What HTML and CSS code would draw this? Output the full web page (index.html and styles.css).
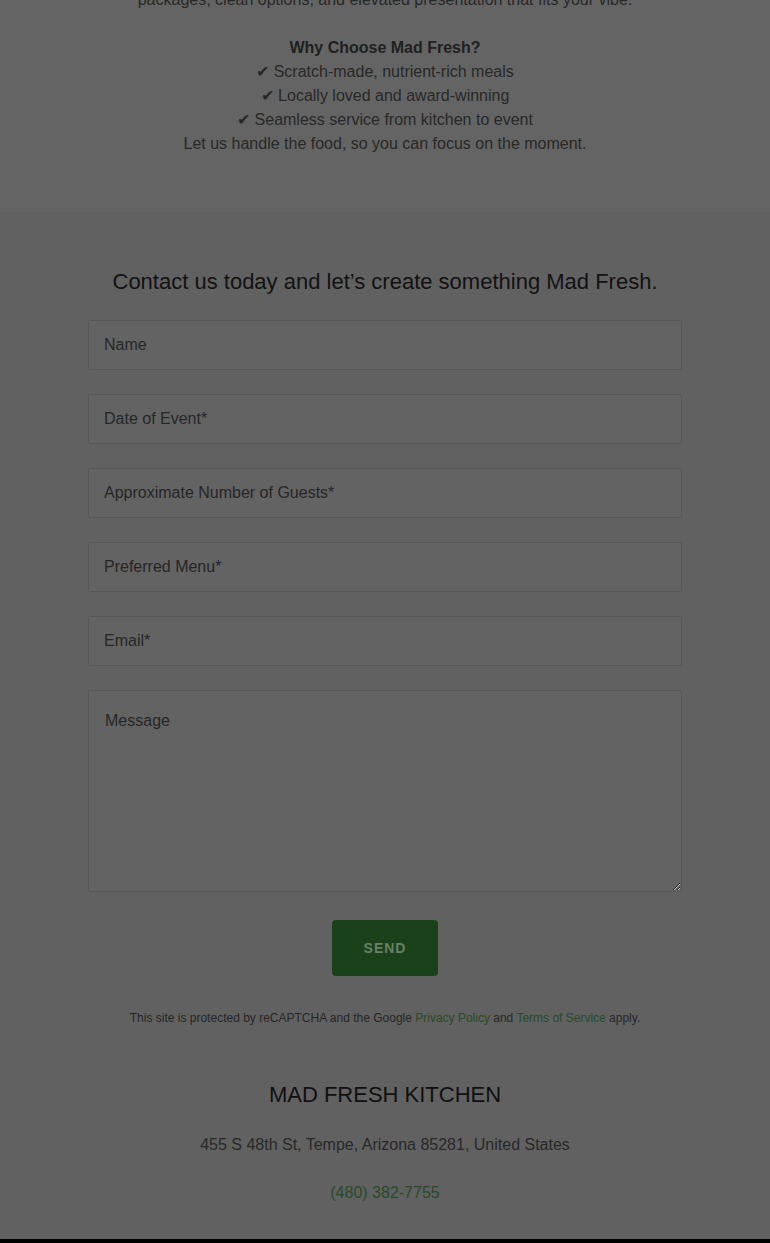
FILE: index.html
```html
<!DOCTYPE html>
<html lang="en">
<head>
<meta charset="utf-8">
<title>Mad Fresh Kitchen</title>
<link rel="stylesheet" href="styles.css">
</head>
<body>
<section class="about">
  <div class="about-text">
    <p>packages, clean options, and elevated presentation that fits your vibe.</p>
    <p class="spacer">&nbsp;</p>
    <p class="strong">Why Choose Mad Fresh?</p>
    <p>✔ Scratch-made, nutrient-rich meals</p>
    <p>✔ Locally loved and award-winning</p>
    <p>✔ Seamless service from kitchen to event</p>
    <p>Let us handle the food, so you can focus on the moment.</p>
  </div>
</section>
<section class="contact">
  <h2 class="contact-title">Contact us today and let’s create something Mad Fresh.</h2>
  <form class="form">
    <input class="field" type="text" placeholder="Name">
    <input class="field" type="text" placeholder="Date of Event*">
    <input class="field" type="text" placeholder="Approximate Number of Guests*">
    <input class="field" type="text" placeholder="Preferred Menu*">
    <input class="field" type="text" placeholder="Email*">
    <textarea class="field area" placeholder="Message"></textarea>
    <button class="send" type="button">SEND</button>
  </form>
  <p class="captcha">This site is protected by reCAPTCHA and the Google <a href="#">Privacy Policy</a> and <a href="#">Terms of Service</a> apply.</p>
  <footer class="footer">
    <h3 class="brand">MAD FRESH KITCHEN</h3>
    <p class="address">455 S 48th St, Tempe, Arizona 85281, United States</p>
    <p class="phone"><a href="#">(480) 382-7755</a></p>
  </footer>
</section>
<div class="bottom-bar"></div>
</body>
</html>
```

FILE: styles.css
```css
* { box-sizing: border-box; }
html, body {
  margin: 0;
  padding: 0;
  background: #616161;
  font-family: "Liberation Sans", Arial, sans-serif;
}
p { margin: 0; }

.about {
  background: #646464;
  overflow: hidden;
  height: 212px;
}
.about-text {
  margin-top: -12px;
  text-align: center;
  font-size: 16px;
  line-height: 24px;
  color: #282828;
}
.about-text .strong {
  font-weight: 700;
  color: #202020;
}

.contact {
  background: #616161;
  padding: 0 88px;
  display: flex;
  flex-direction: column;
  align-items: stretch;
}
.contact-title {
  margin: 56px 0 24px;
  text-align: center;
  font-size: 22px;
  line-height: 28px;
  font-weight: 400;
  color: #121212;
}
.form {
  display: flex;
  flex-direction: column;
  gap: 24px;
  align-items: center;
}
.field {
  width: 100%;
  height: 50px;
  border: 1px solid #575757;
  border-radius: 2px;
  background: #636363;
  padding: 0 15px;
  font-family: "Liberation Sans", Arial, sans-serif;
  font-size: 16px;
  color: #242424;
  outline: none;
}
.field::placeholder { color: #262626; opacity: 1; }
.area {
  height: 202px;
  padding: 20px 16px;
  line-height: 20px;
  resize: vertical;
}
.send {
  margin-top: 4px;
  width: 106px;
  height: 56px;
  border: none;
  border-radius: 4px;
  background: #1a411a;
  color: #678067;
  font-family: "Liberation Sans", Arial, sans-serif;
  font-weight: 700;
  font-size: 14px;
  letter-spacing: 1px;
}
.captcha {
  margin-top: 34px;
  text-align: center;
  font-size: 12px;
  line-height: 16px;
  color: #262626;
}
.captcha a { color: #284a28; text-decoration: none; }

.footer {
  text-align: center;
  padding: 55px 0 34px;
}
.brand {
  margin: 0;
  font-size: 22px;
  line-height: 28px;
  font-weight: 400;
  color: #101010;
}
.address {
  margin-top: 24px;
  font-size: 16px;
  line-height: 24px;
  color: #282828;
}
.phone {
  margin-top: 24px;
  font-size: 16px;
  line-height: 24px;
}
.phone a { color: #284a28; text-decoration: none; }

.bottom-bar {
  height: 40px;
  background: #000;
}
```
